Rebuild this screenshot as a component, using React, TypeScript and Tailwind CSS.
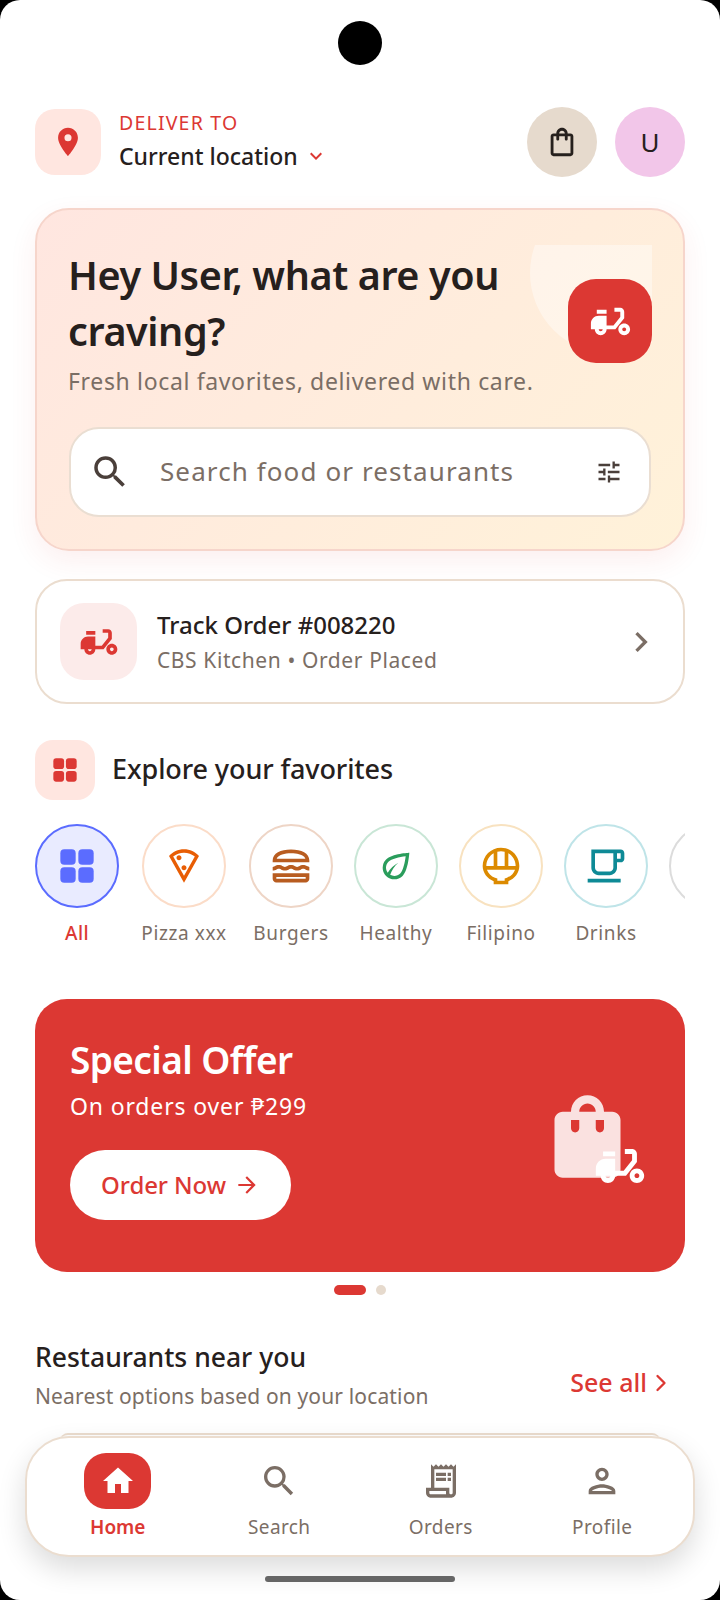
import { ChevronRight } from "lucide-react";
import {
  MdArrowForward,
  MdChevronRight,
  MdHome,
  MdKeyboardArrowDown,
  MdLocationOn,
  MdMoped,
  MdOutlineEco,
  MdOutlineLocalCafe,
  MdOutlineLocalPizza,
  MdOutlineLunchDining,
  MdOutlinePerson,
  MdOutlineReceiptLong,
  MdOutlineRiceBowl,
  MdOutlineShoppingBag,
  MdSearch,
  MdShoppingBag,
  MdTune,
} from "react-icons/md";

function GridIcon({ className }: { className: string }) {
  return (
    <svg viewBox="0 0 24 24" className={className} fill="currentColor">
      <rect x="2" y="2" width="9.2" height="9.2" rx="2.4" />
      <rect x="12.8" y="2" width="9.2" height="9.2" rx="2.4" />
      <rect x="2" y="12.8" width="9.2" height="9.2" rx="2.4" />
      <rect x="12.8" y="12.8" width="9.2" height="9.2" rx="2.4" />
    </svg>
  );
}

const categories = [
  { label: "Pizza xxx", width: "w-[88px]", ring: "border-[#fbdcc8]", icon: <MdOutlineLocalPizza className="h-10 w-10 text-[#e85d04]" /> },
  { label: "Burgers", width: "w-[84px]", ring: "border-[#eed5c6]", icon: <MdOutlineLunchDining className="h-11 w-11 text-[#b85c20]" /> },
  { label: "Healthy", width: "w-[84px]", ring: "border-[#c9e6d6]", icon: <MdOutlineEco className="h-10 w-10 text-[#2a9d5c]" /> },
  { label: "Filipino", width: "w-[84px]", ring: "border-[#f8e2c0]", icon: <MdOutlineRiceBowl className="h-11 w-11 text-[#dc8a00]" /> },
  { label: "Drinks", width: "w-[84px]", ring: "border-[#bfe4e8]", icon: <MdOutlineLocalCafe className="h-11 w-11 text-[#0e8a96]" /> },
];

const tabs = [
  { label: "Search", icon: <MdSearch className="h-10 w-10" /> },
  { label: "Orders", icon: <MdOutlineReceiptLong className="h-10 w-10" /> },
  { label: "Profile", icon: <MdOutlinePerson className="h-10 w-10" /> },
];

export default function App() {
  return (
    <div className="h-[1600px] w-[720px] overflow-hidden bg-black font-['Noto_Sans',sans-serif] text-[#26201d]">
      <div className="relative flex h-full flex-col overflow-hidden rounded-[20px] bg-white px-[35px] pt-[107px]">
        <div className="absolute left-[338px] top-[21px] h-[44px] w-[44px] rounded-full bg-black" />

        {/* header */}
        <header className="flex h-[70px] items-center">
          <div className="grid h-[66px] w-[66px] place-items-center rounded-[20px] bg-[#ffe6e0] text-[#dc3833]">
            <MdLocationOn className="h-[34px] w-[34px]" />
          </div>
          <div className="ml-[18px] flex-1">
            <p className="-mt-[2px] text-[19.5px] leading-[24px] tracking-[1.2px] text-[#dc3833]">DELIVER TO</p>
            <div className="mt-[5px] flex items-center gap-[6px]">
              <span className="text-[23px] leading-[32px] font-medium">Current location</span>
              <MdKeyboardArrowDown className="h-6 w-6 text-[#dc3833]" />
            </div>
          </div>
          <div className="grid h-[70px] w-[70px] place-items-center rounded-full bg-[#e6dacd]">
            <MdOutlineShoppingBag className="h-[34px] w-[34px]" />
          </div>
          <div className="ml-[18px] grid h-[70px] w-[70px] place-items-center rounded-full bg-[#f2c6e9] text-[26px]">U</div>
        </header>

        {/* hero */}
        <section className="relative mt-[31px] h-[343px] rounded-[34px] border-2 border-[#f6d5cb] bg-[linear-gradient(135deg,#ffe6e0,#fff2d9)] px-[32px] pt-[37px] shadow-[0_10px_28px_rgba(220,56,51,0.08)]">
          <div className="absolute left-[493px] top-[35px] h-[122px] w-[122px] overflow-hidden">
            <div className="h-[162px] w-[162px] -translate-y-[53px] rounded-full bg-white/40" />
          </div>
          <div className="absolute right-[31px] top-[69px] grid h-[84px] w-[84px] place-items-center rounded-[28px] bg-[#dc3833] text-white">
            <MdMoped className="h-[47px] w-[47px]" />
          </div>
          <h1 className="relative -ml-[1px] w-[490px] text-[39.5px] leading-[56px] font-semibold tracking-[-0.4px]">Hey User, what are you craving?</h1>
          <p className="relative -ml-[1px] mt-[6px] text-[23px] leading-[32px] tracking-[0.65px] text-[#7b6e65]">Fresh local favorites, delivered with care.</p>
          <div className="relative mt-[30px] flex h-[90px] items-center rounded-[30px] border-2 border-[#eaded2] bg-white pl-[18px] pr-[26px]">
            <MdSearch className="h-[42px] w-[42px] text-[#4a3f3a]" />
            <span className="-mt-[2px] ml-[29px] flex-1 text-[26px] tracking-[1.1px] text-[#7b6e65]">Search food or restaurants</span>
            <MdTune className="h-7 w-7 text-[#4a3f3a]" />
          </div>
        </section>

        {/* track order */}
        <section className="mt-[28px] flex h-[125px] items-center rounded-[32px] border-2 border-[#ebddcf] pl-[23px] pr-[22px]">
          <div className="grid h-[77px] w-[77px] place-items-center rounded-[24px] bg-[#fcebea] text-[#dc3833]">
            <MdMoped className="h-11 w-11" />
          </div>
          <div className="ml-[20px] flex-1">
            <p className="text-[24px] leading-[32px] font-medium">Track Order #008220</p>
            <p className="mt-[4px] text-[21px] leading-[30px] tracking-[0.6px] text-[#7b6e65]">CBS Kitchen • Order Placed</p>
          </div>
          <MdChevronRight className="h-10 w-10 text-[#7b6e65]" />
        </section>

        {/* explore */}
        <div className="mt-[36px] flex items-center gap-[17px]">
          <div className="grid h-[60px] w-[60px] place-items-center rounded-[18px] bg-[#ffe6e0] text-[#dc3833]">
            <GridIcon className="h-7 w-7" />
          </div>
          <h2 className="-mt-[2px] text-[27px] font-medium tracking-[-0.1px]">Explore your favorites</h2>
        </div>

        <div className="mt-[24px] flex gap-[21px] overflow-hidden">
          <div className="flex w-[84px] shrink-0 flex-col items-center">
            <div className="grid h-[84px] w-[84px] place-items-center rounded-full border-2 border-[#5b6cff] bg-[#e9ebff] text-[#5b6cff]">
              <GridIcon className="h-10 w-10" />
            </div>
            <span className="mt-[13px] text-[19px] leading-[24px] font-medium tracking-[0.4px] text-[#dc3833]">All</span>
          </div>
          {categories.map((c) => (
            <div key={c.label} className={`flex shrink-0 flex-col items-center ${c.width}`}>
              <div className={`grid h-[84px] w-[84px] place-items-center rounded-full border-2 ${c.ring}`}>{c.icon}</div>
              <span className="mt-[13px] text-[19px] leading-[24px] tracking-[0.6px] whitespace-nowrap text-[#7b6e65]">{c.label}</span>
            </div>
          ))}
          <div className="h-[84px] w-[84px] shrink-0 rounded-full border-2 border-[#dcdcdc]" />
        </div>

        {/* offer */}
        <section className="relative mt-[54px] h-[273px] rounded-[32px] bg-[#dc3833] pl-[35px] pt-[37px] text-white">
          <h3 className="text-[37px] leading-[48px] font-semibold tracking-[-0.6px]">Special Offer</h3>
          <p className="mt-[6px] text-[23px] leading-[32px] tracking-[0.85px]">On orders over ₱299</p>
          <button className="mt-[28px] flex h-[70px] w-[221px] items-center justify-center gap-[8px] rounded-full bg-white text-[24px] font-medium tracking-[-0.1px] text-[#dc3833]">
            Order Now <MdArrowForward className="h-[26px] w-[26px]" />
          </button>
          <MdShoppingBag className="absolute left-[503px] top-[88px] h-[99px] w-[99px] text-white/85" />
          <MdMoped className="absolute left-[556px] top-[138px] h-[58px] w-[58px] text-white" />
        </section>

        <div className="mt-[13px] flex justify-center gap-[10px]">
          <span className="h-[10px] w-[32px] rounded-full bg-[#dc3833]" />
          <span className="h-[10px] w-[10px] rounded-full bg-[#e6dacd]" />
        </div>

        {/* restaurants */}
        <div className="mt-[44px] flex items-center justify-between">
          <div>
            <h2 className="text-[26.5px] leading-[36px] font-medium">Restaurants near you</h2>
            <p className="mt-[6px] text-[21px] leading-[30px] tracking-[0.15px] text-[#7b6e65]">Nearest options based on your location</p>
          </div>
          <div className="mr-[10px] mt-[16px] flex items-center text-[25px] font-medium text-[#dc3833]">
            See all <ChevronRight className="h-7 w-7" />
          </div>
        </div>

        {/* bottom nav */}
        <div className="absolute left-[60px] right-[60px] top-[1433px] h-[8px] rounded-t-[20px] border-t-2 border-[#ebddcf]" />
        <nav className="absolute left-[25px] top-[1436px] grid h-[121px] w-[670px] grid-cols-4 rounded-[44px] border-2 border-[#ebddcf] bg-white px-[10px] shadow-[0_12px_28px_rgba(0,0,0,0.14)]">
          <div className="flex flex-col items-center pt-[15px] text-[#dc3833]">
            <div className="grid h-[56px] w-[67px] place-items-center rounded-[22px] bg-[#dc3833] text-white">
              <MdHome className="h-9 w-9" />
            </div>
            <span className="mt-[4px] text-[19px] font-semibold">Home</span>
          </div>
          {tabs.map((t) => (
            <div key={t.label} className="flex flex-col items-center pt-[15px] text-[#7b6e65]">
              <div className="grid h-[56px] place-items-center">{t.icon}</div>
              <span className="mt-[4px] text-[19px] tracking-[0.4px]">{t.label}</span>
            </div>
          ))}
        </nav>
        <div className="absolute bottom-[18px] left-[265px] h-[6px] w-[190px] rounded-full bg-[#666666]" />
      </div>
    </div>
  );
}
